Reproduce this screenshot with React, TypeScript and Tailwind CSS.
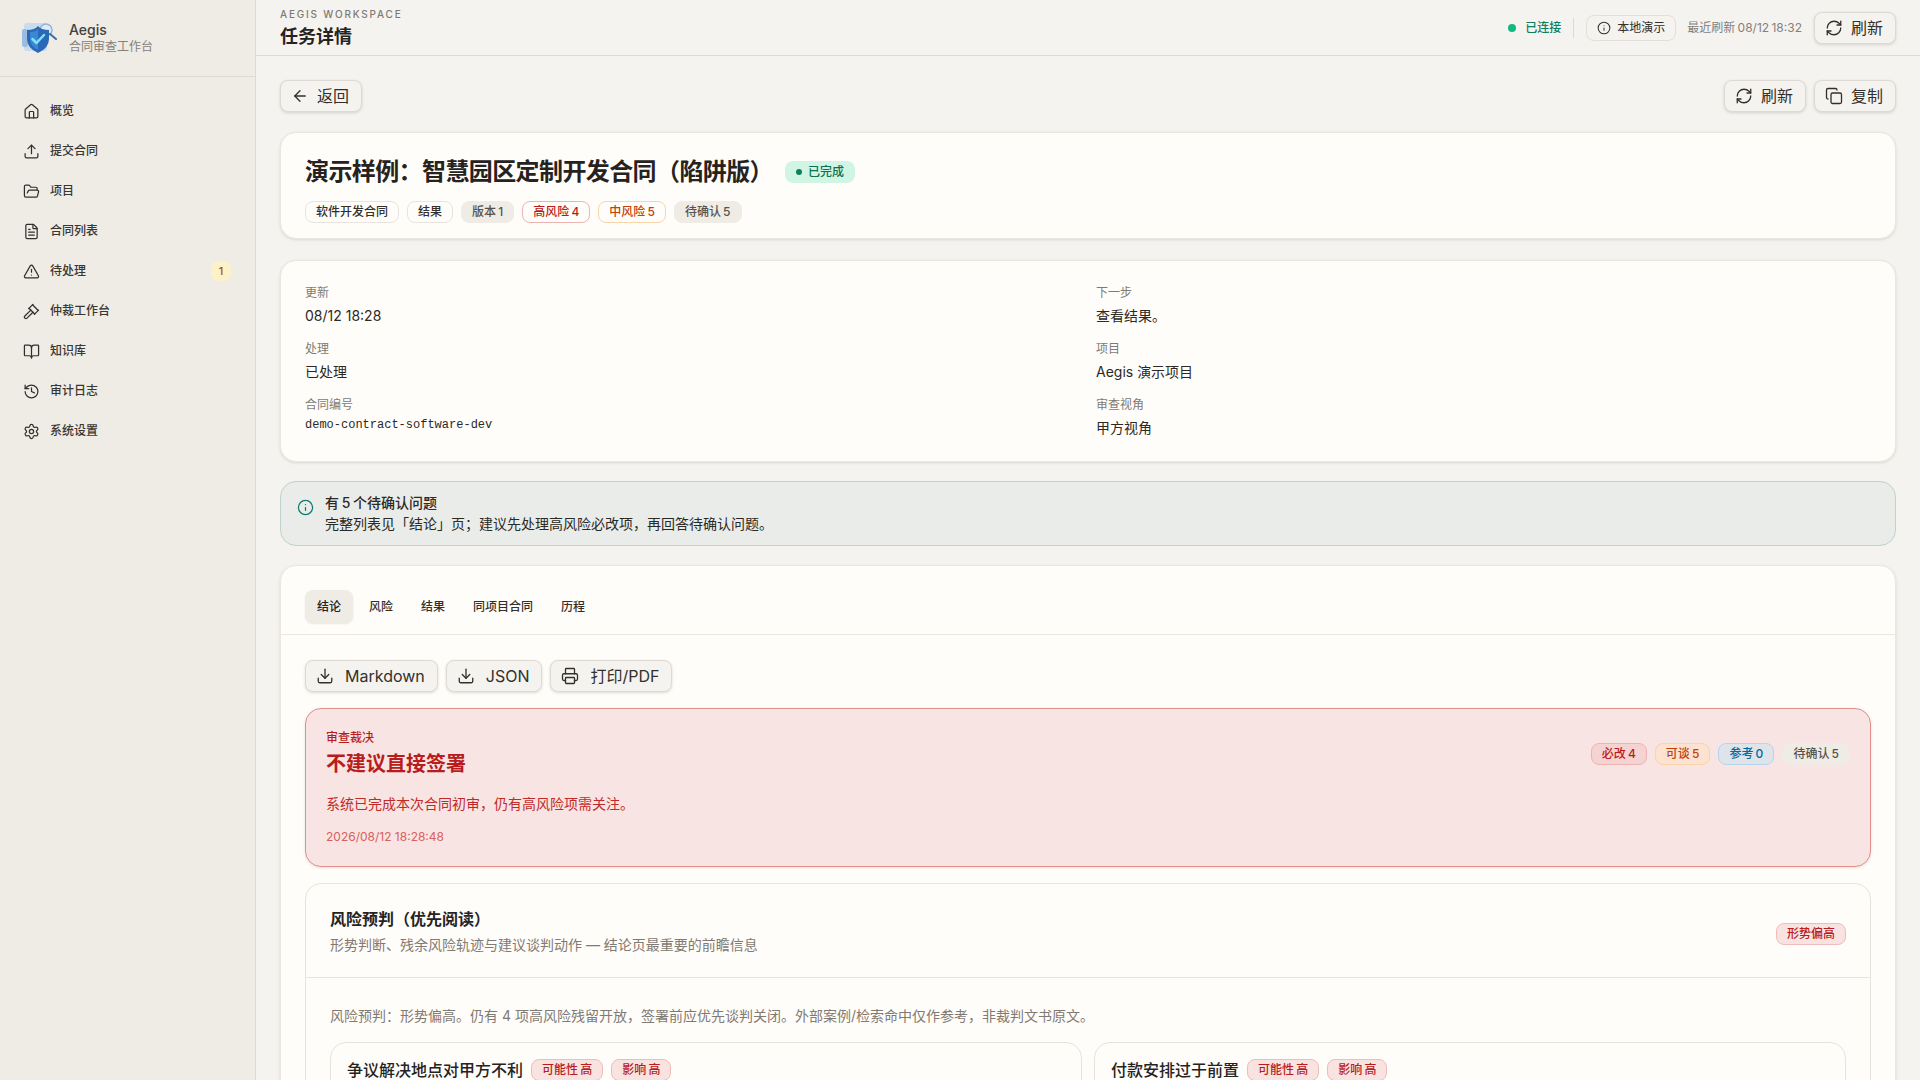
// Contract task detail page
import React from "react";
import {
  ArrowLeft,
  BookOpen,
  Copy,
  Download,
  FileText,
  FolderOpen,
  Gavel,
  History,
  House,
  Info,
  Printer,
  RefreshCw,
  Settings,
  TriangleAlert,
  Upload,
} from "lucide-react";

const navItems = [
  { label: "概览", icon: House },
  { label: "提交合同", icon: Upload },
  { label: "项目", icon: FolderOpen },
  { label: "合同列表", icon: FileText },
  { label: "待处理", icon: TriangleAlert, badge: "1" },
  { label: "仲裁工作台", icon: Gavel },
  { label: "知识库", icon: BookOpen },
  { label: "审计日志", icon: History },
  { label: "系统设置", icon: Settings },
];

function Logo() {
  return (
    <svg width="36" height="34" viewBox="0 0 36 34" className="shrink-0">
      <rect x="3" y="2" width="23" height="28" rx="3" fill="#c9dcef" />
      <rect x="1" y="8" width="6" height="18" rx="2" fill="#9dbde0" />
      <circle cx="25" cy="9" r="6" fill="#dfeaf5" stroke="#93b4d8" strokeWidth="1.5" />
      <path d="M29 13 L35 18" stroke="#3a6ca8" strokeWidth="2" strokeLinecap="round" />
      <path d="M6 9 Q14 9 17 5 Q20 9 28 9 L28 18 Q28 27 17 32 Q6 27 6 18 Z" fill="#2a69b5" />
      <path d="M9 11 Q15 11 17 8 L17 29 Q9 25 9 18 Z" fill="#3b87d4" />
      <path d="M11.5 18 L15.5 22 L23 14" fill="none" stroke="#7de6f5" strokeWidth="2.5" strokeLinecap="round" strokeLinejoin="round" />
    </svg>
  );
}

function Sidebar() {
  return (
    <aside className="flex w-[256px] shrink-0 flex-col border-r border-[#dedad3] bg-[#efebe5]">
      <div className="flex h-[77px] items-center gap-3 border-b border-[#dedad3] px-[21px] pb-[1px]">
        <Logo />
        <div>
          <div className="text-[14px] leading-[17px] font-medium text-[#45413b]">Aegis</div>
          <div className="mt-[1px] text-[12px] leading-[16px] text-[#85807a]">合同审查工作台</div>
        </div>
      </div>
      <nav className="flex flex-col px-4 pt-[14px]">
        {navItems.map((item) => (
          <div key={item.label} className="flex h-10 items-center gap-[10px] pl-[7px] pr-[8px] text-[12px] font-medium text-[#3a3732]">
            <item.icon size={17} strokeWidth={1.75} className="text-[#33302b]" />
            <span>{item.label}</span>
            {item.badge && (
              <span className="ml-auto flex h-5 w-5 items-center justify-center rounded-lg bg-[#fdf1c7] text-[11px] font-medium text-[#a8510f]">
                {item.badge}
              </span>
            )}
          </div>
        ))}
      </nav>
    </aside>
  );
}

function Button({ icon: Icon, wide, children }: { icon: React.ElementType; wide?: boolean; children: React.ReactNode }) {
  return (
    <button
      className={
        wide
          ? "flex h-8 items-center gap-[11px] rounded-lg border border-[#dedad3] bg-[#f5f3ef] pr-3 pl-[10px] text-[16px] text-[#33302b] shadow-[0_1px_3px_rgba(40,30,20,0.15)]"
          : "flex h-8 items-center gap-2 rounded-lg border border-[#dedad3] bg-[#f5f3ef] pr-3 pl-[10px] text-[16px] text-[#33302b] shadow-[0_1px_3px_rgba(40,30,20,0.15)]"
      }
    >
      <Icon size={18} strokeWidth={1.75} />
      <span>{children}</span>
    </button>
  );
}

function Tag({ className, children }: { className: string; children: React.ReactNode }) {
  return (
    <span className={"inline-flex h-[22px] shrink-0 items-center rounded-lg border px-[10px] text-[12px] font-medium whitespace-nowrap [word-spacing:-1px] " + className}>
      {children}
    </span>
  );
}

function Meta({ label, children, mono }: { label: string; children: React.ReactNode; mono?: boolean }) {
  return (
    <div className="h-[40px]">
      <div className="text-[12px] leading-[16px] text-[#7f7a73]">{label}</div>
      <div className={mono ? "mt-[2px] font-['Liberation_Mono',monospace] text-[12px] leading-[20px] text-[#2c2925]" : "mt-[5px] text-[14px] leading-[20px] text-[#2c2925]"}>
        {children}
      </div>
    </div>
  );
}

function RiskCard({ title }: { title: string }) {
  return (
    <div className="rounded-2xl border border-[#e8e4dd] px-4 pt-[15px] pb-6">
      <div className="flex items-center gap-2">
        <span className="text-[16px] leading-[24px] font-medium text-[#26231f]">{title}</span>
        <Tag className="border-[#efbcb9] bg-[#f8e3e1] text-[#b91c1c]">可能性 高</Tag>
        <Tag className="border-[#efbcb9] bg-[#f8e3e1] text-[#b91c1c]">影响 高</Tag>
      </div>
    </div>
  );
}

export default function App() {
  return (
    <div className="flex h-screen overflow-hidden bg-[#f5f3ef] font-['Inter','Noto_Sans_CJK_SC',sans-serif] text-[#26231f]">
      <Sidebar />
      <div className="flex min-w-0 flex-1 flex-col">
        <header className="flex h-[56px] shrink-0 items-center border-b border-[#dedad3] px-6">
          <div>
            <div className="text-[10px] leading-[14px] font-medium tracking-[0.18em] text-[#7f7a73]">AEGIS WORKSPACE</div>
            <div className="mt-[4px] text-[18px] leading-[24px] font-semibold text-[#26231f]">任务详情</div>
          </div>
          <div className="ml-auto flex items-center">
            <span className="h-2 w-2 rounded-full bg-[#10b981]" />
            <span className="ml-[9px] text-[12px] font-medium text-[#0f7f5f]">已连接</span>
            <span className="mx-3 h-5 w-px bg-[#dedad3]" />
            <span className="flex h-[26px] items-center gap-[6px] rounded-lg border border-[#e3dfd8] px-[10px] text-[12px] text-[#33302b]">
              <Info size={14} strokeWidth={1.75} />
              本地演示
            </span>
            <span className="ml-[11px] text-[12px] text-[#85807a] [word-spacing:-1px]">最近刷新 08/12 18:32</span>
            <div className="ml-3">
              <Button icon={RefreshCw}>刷新</Button>
            </div>
          </div>
        </header>

        <main className="min-h-0 flex-1 overflow-hidden px-6 pt-6">
          <div className="flex items-center justify-between">
            <Button icon={ArrowLeft}>返回</Button>
            <div className="flex gap-2">
              <Button icon={RefreshCw}>刷新</Button>
              <Button icon={Copy}>复制</Button>
            </div>
          </div>

          <section className="mt-[20px] h-[107px] rounded-2xl border border-[#ebe7e0] bg-[#fffdf9] px-6 pt-[23px] shadow-[0_1px_3px_rgba(40,30,20,0.12)]">
            <div className="flex items-center gap-3">
              <h1 className="text-[24px] leading-[32px] font-semibold tracking-tight text-[#26231f]">演示样例：智慧园区定制开发合同（陷阱版）</h1>
              <span className="flex h-[22px] items-center gap-[6px] rounded-lg bg-[#d1f5e4] px-[11px] text-[12px] font-medium text-[#0f7050]">
                <span className="h-[6px] w-[6px] rounded-full bg-[#0f7f5f]" />
                已完成
              </span>
            </div>
            <div className="mt-[13px] flex gap-2">
              <Tag className="border-[#e8e4dd] text-[#33302b]">软件开发合同</Tag>
              <Tag className="border-[#e8e4dd] text-[#33302b]">结果</Tag>
              <Tag className="border-[#efebe5] bg-[#efebe5] text-[#57534c]">版本 1</Tag>
              <Tag className="border-[#ebb4b2] text-[#b91c1c]">高风险 4</Tag>
              <Tag className="border-[#f8d5a8] text-[#c2410c]">中风险 5</Tag>
              <Tag className="border-[#efebe5] bg-[#efebe5] text-[#57534c]">待确认 5</Tag>
            </div>
          </section>

          <section className="mt-[21px] rounded-2xl border border-[#ebe7e0] bg-[#fffdf9] px-6 pt-[24px] pb-[24px] shadow-[0_1px_3px_rgba(40,30,20,0.12)]">
            <div className="grid grid-cols-2 gap-x-4 gap-y-4">
              <Meta label="更新">08/12 18:28</Meta>
              <Meta label="下一步">查看结果。</Meta>
              <Meta label="处理">已处理</Meta>
              <Meta label="项目">Aegis 演示项目</Meta>
              <Meta label="合同编号" mono>demo-contract-software-dev</Meta>
              <Meta label="审查视角">甲方视角</Meta>
            </div>
          </section>

          <section className="mt-[19px] flex h-[65px] gap-[11px] rounded-2xl border border-[#bcd3cf] bg-[#e9ece9] px-4 pt-[10px]">
            <Info size={17} strokeWidth={1.75} className="mt-[7px] text-[#0f766e]" />
            <div className="text-[14px] leading-[21px] text-[#2c2925] [word-spacing:-1px]">
              <div className="font-medium">有 5 个待确认问题</div>
              <div>完整列表见「结论」页；建议先处理高风险必改项，再回答待确认问题。</div>
            </div>
          </section>

          <section className="mt-[19px] rounded-t-2xl border border-[#ebe7e0] bg-[#fffdf9] shadow-[0_1px_3px_rgba(40,30,20,0.12)]">
            <div className="flex h-[69px] items-start gap-[4px] border-b border-[#ebe7e0] px-6 pt-[24px]">
              {["结论", "风险", "结果", "同项目合同", "历程"].map((tab, i) => (
                <span
                  key={tab}
                  className={
                    i === 0
                      ? "flex h-[33px] items-center rounded-lg bg-[#efebe5] px-3 text-[12px] font-medium text-[#26231f] shadow-[0_1px_2px_rgba(40,30,20,0.1)]"
                      : "flex h-[33px] items-center rounded-lg px-3 text-[12px] font-medium text-[#33302b]"
                  }
                >
                  {tab}
                </span>
              ))}
            </div>

            <div className="px-6 pt-[25px]">
              <div className="flex gap-2">
                <Button icon={Download} wide>Markdown</Button>
                <Button icon={Download} wide>JSON</Button>
                <Button icon={Printer} wide>打印/PDF</Button>
              </div>

              <div className="mt-4 flex h-[159px] justify-between rounded-2xl border border-[#e38f8c] bg-[#f7e4e3] px-5 pt-[21px] shadow-[0_1px_3px_rgba(40,30,20,0.12)]">
                <div>
                  <div className="text-[12px] leading-[16px] font-medium text-[#b91c1c]">审查裁决</div>
                  <div className="mt-[4px] text-[20px] leading-[28px] font-semibold text-[#b91c1c]">不建议直接签署</div>
                  <div className="mt-[16px] text-[14px] leading-[20px] text-[#c22a2a]">系统已完成本次合同初审，仍有高风险项需关注。</div>
                  <div className="mt-[15px] text-[12px] leading-[16px] text-[#d9605e]">2026/08/12 18:28:48</div>
                </div>
                <div className="mt-[13px] flex items-start gap-2">
                  <Tag className="border-[#ecb3b1] bg-[#f5d3d2] text-[#b91c1c]">必改 4</Tag>
                  <Tag className="border-[#fad3a8] bg-[#fbe3d0] text-[#c2410c]">可谈 5</Tag>
                  <Tag className="border-[#b5d5ee] bg-[#dfe3ea] text-[#0369a1]">参考 0</Tag>
                  <Tag className="border-[#efebe5] bg-[#efebe5] text-[#57534c]">待确认 5</Tag>
                </div>
              </div>

              <div className="mt-4 rounded-t-2xl border border-[#e8e4dd]">
                <div className="flex h-[94px] items-start justify-between border-b border-[#e8e4dd] px-6 pt-[23px]">
                  <div>
                    <div className="text-[16px] leading-[24px] font-semibold text-[#26231f]">风险预判（优先阅读）</div>
                    <div className="mt-[4px] text-[14px] leading-[20px] text-[#7f7a73]">形势判断、残余风险轨迹与建议谈判动作 — 结论页最重要的前瞻信息</div>
                  </div>
                  <div className="mt-[13px]">
                    <Tag className="border-[#efbcb9] bg-[#f8e3e1] text-[#b91c1c]">形势偏高</Tag>
                  </div>
                </div>
                <div className="px-6 pt-[28px]">
                  <div className="text-[14px] leading-[20px] text-[#7f7a73]">风险预判：形势偏高。仍有 4 项高风险残留开放，签署前应优先谈判关闭。外部案例/检索命中仅作参考，非裁判文书原文。</div>
                  <div className="mt-[16px] grid grid-cols-2 gap-3">
                    <RiskCard title="争议解决地点对甲方不利" />
                    <RiskCard title="付款安排过于前置" />
                  </div>
                </div>
              </div>
            </div>
          </section>
        </main>
      </div>
    </div>
  );
}
